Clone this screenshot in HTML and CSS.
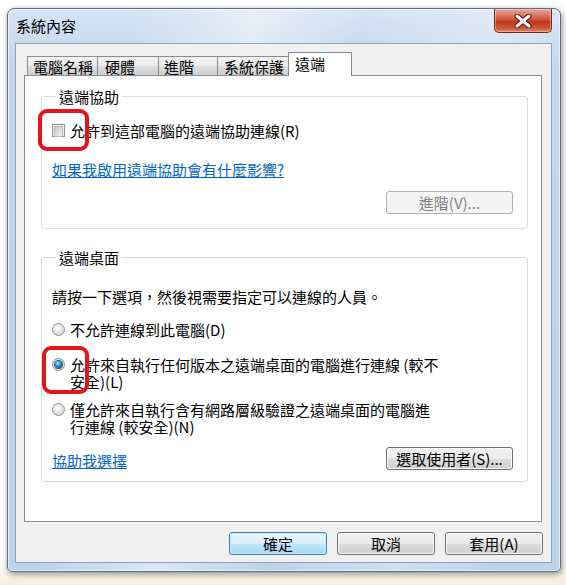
FILE: index.html
```html
<!DOCTYPE html>
<html lang="zh-Hant">
<head>
    <meta charset="UTF-8">
    <meta name="viewport" content="width=device-width, initial-scale=1.0">
    <title>系統內容</title>
    <link rel="stylesheet" href="styles.css">
</head>
<body>
    <div class="window">
        <div class="titlebar">
            <span class="title">系統內容</span>
            <button class="close-btn" aria-label="關閉">
                <svg width="18" height="14" viewBox="0 0 18 14">
                    <path d="M3 2 L15 12 M15 2 L3 12" stroke="#4a1d17" stroke-width="5.2" stroke-linecap="round" fill="none"/>
                    <path d="M3 2 L15 12 M15 2 L3 12" stroke="#ffffff" stroke-width="3" stroke-linecap="round" fill="none"/>
                </svg>
            </button>
        </div>

        <div class="client">
            <div class="tabs">
                <div class="tab tab-name">電腦名稱</div>
                <div class="tab tab-hw">硬體</div>
                <div class="tab tab-adv">進階</div>
                <div class="tab tab-prot">系統保護</div>
                <div class="tab tab-remote selected">遠端</div>
            </div>

            <div class="panel">
                <div class="group group-assist">
                    <div class="group-title">遠端協助</div>
                    <label class="option">
                        <span class="checkbox"></span>
                        <span>允許到這部電腦的遠端協助連線(R)</span>
                    </label>
                    <a class="link" href="#">如果我啟用遠端協助會有什麼影響?</a>
                    <div class="btn-row right">
                        <button class="btn wide" disabled>進階(V)...</button>
                    </div>
                    <span class="highlight hl-check"></span>
                </div>

                <div class="group group-desktop">
                    <div class="group-title">遠端桌面</div>
                    <p class="desc">請按一下選項，然後視需要指定可以連線的人員。</p>
                    <label class="option radio-1">
                        <span class="radio"></span>
                        <span>不允許連線到此電腦(D)</span>
                    </label>
                    <label class="option radio-2">
                        <span class="radio checked"></span>
                        <span>允許來自執行任何版本之遠端桌面的電腦進行連線 (較不<br>安全)(L)</span>
                    </label>
                    <label class="option radio-3">
                        <span class="radio"></span>
                        <span>僅允許來自執行含有網路層級驗證之遠端桌面的電腦進<br>行連線 (較安全)(N)</span>
                    </label>
                    <div class="btn-row split">
                        <a class="link" href="#">協助我選擇</a>
                        <button class="btn wide">選取使用者(S)...</button>
                    </div>
                    <span class="highlight hl-radio"></span>
                </div>
            </div>

            <div class="dialog-buttons">
                <button class="btn default">確定</button>
                <button class="btn">取消</button>
                <button class="btn">套用(A)</button>
            </div>
        </div>
    </div>
</body>
</html>
```

FILE: styles.css
```css
* { box-sizing: border-box; }
body {
    margin: 0;
    padding: 8px 0 0 7px;
    height: 585px;
    background: linear-gradient(#ffffff 0, #ffffff 560px, #f4f0dc 100%);
    font-family: "Noto Sans CJK TC", "Noto Sans", sans-serif;
    font-size: 15px;
    line-height: 17px;
    color: #000;
    overflow: hidden;
}

/* window frame */
.window {
    width: 554px;
    height: 564px;
    display: flex;
    flex-direction: column;
    border: 1px solid #5d6f86;
    border-radius: 7px 7px 5px 5px;
    background:
        linear-gradient(100deg, rgba(255,255,255,0) 20%, rgba(255,255,255,0.45) 38%, rgba(255,255,255,0) 55%, rgba(255,255,255,0.3) 75%, rgba(255,255,255,0) 90%),
        linear-gradient(#d6e4f3, #c0d5ed 60px, #bcd3ec 100%);
    box-shadow: 1px 2px 6px rgba(0,0,0,0.45), inset 0 0 0 1px rgba(255,255,255,0.6);
}
.titlebar {
    height: 34px;
    display: flex;
    justify-content: space-between;
    align-items: flex-start;
    padding: 0 8px 0 8px;
}
.title { margin-top: 8px; }
.close-btn {
    width: 58px;
    height: 24px;
    margin-top: 0;
    padding: 0;
    border: 1px solid #6b2b22;
    border-top: none;
    border-radius: 0 0 5px 5px;
    background: linear-gradient(#e9a99b 0, #d5604a 40%, #c2361b 55%, #cf5a3c 85%, #e08b6c 100%);
    box-shadow: inset 0 0 0 1px rgba(255,220,200,0.45);
    display: flex;
    align-items: center;
    justify-content: center;
}

/* client area */
.client {
    flex: 1;
    margin: 0 8px 8px 7px;
    background: #f0f0f0;
    border: 1px solid #8da2bb;
    display: flex;
    flex-direction: column;
}
.tabs {
    display: flex;
    align-items: flex-end;
    height: 31px;
    padding: 8px 0 0 11px;
}
.tab {
    height: 19px;
    margin-right: -1px;
    padding: 1px 0 0 5px;
    border: 1px solid #898c95;
    border-bottom: none;
    background: linear-gradient(#f3f3f3 0, #ebebeb 50%, #dddddd 51%, #cfcfcf 100%);
    white-space: nowrap;
}
.tab-name { width: 71px; }
.tab-hw { width: 62px; padding-left: 7px; }
.tab-adv { width: 60px; padding-left: 5px; }
.tab-prot { width: 73px; padding-left: 6px; }
.tab.selected {
    width: 64px;
    height: 24px;
    margin-left: -1px;
    margin-bottom: -1px;
    padding: 2px 0 0 6px;
    background: #fff;
    position: relative;
    z-index: 1;
}
.panel {
    width: 518px;
    height: 447px;
    margin-left: 8px;
    background: #fff;
    border: 1px solid #898c95;
    padding: 20px 13px 0 16px;
}

/* group boxes */
.group {
    position: relative;
    border: 1px solid #d5dfe5;
    border-radius: 3px;
    padding: 0 14px 14px 10px;
}
.group-desktop { margin-top: 28px; padding-bottom: 11px; }
.group-title {
    display: table;
    margin: -9px 0 0 4px;
    padding: 0 3px;
    background: #fff;
}
.option {
    display: flex;
    align-items: flex-start;
    gap: 5px;
}
.group-assist .option { margin-top: 17px; }
.desc { margin: 22px 0 0 0; }
.radio-1 { margin-top: 16px; }
.radio-2 { margin-top: 18px; }
.radio-3 { margin-top: 11px; }

.checkbox {
    flex: none;
    width: 13px;
    height: 13px;
    margin-top: 2px;
    border: 1px solid #8e8f8f;
    background: #f4f4f4;
}
.checkbox::after {
    content: "";
    display: block;
    margin: 1px;
    height: 9px;
    border: 1px solid #b5b9bd;
    background: linear-gradient(135deg, #c6cacf, #f2f2f2);
}
.radio {
    flex: none;
    width: 13px;
    height: 13px;
    margin-top: 2px;
    border: 1px solid #8e8f8f;
    border-radius: 50%;
    background: radial-gradient(circle at 40% 35%, #ffffff 0, #e6e6e6 45%, #c9c9c9 100%);
}
.radio.checked::after {
    content: "";
    display: block;
    width: 7px;
    height: 7px;
    margin: 2px;
    border-radius: 50%;
    background: radial-gradient(circle at 40% 35%, #c6ecfd 0, #3a9ad8 35%, #0c4b7f 80%);
    box-shadow: 0 0 0 1px #1b5a8a;
}

.link {
    display: table;
    color: #0066cc;
    text-decoration: underline;
}
.group-assist .link { margin-top: 22px; }
.btn-row {
    display: flex;
    margin-top: 13px;
}
.btn-row.right { justify-content: flex-end; }
.btn-row.split {
    justify-content: space-between;
    align-items: flex-end;
    margin-top: 12px;
}
.btn-row.split .link { margin-bottom: 1px; }

/* buttons */
.btn {
    width: 98px;
    height: 23px;
    padding: 0;
    border: 1px solid #707070;
    border-radius: 3px;
    background: linear-gradient(#f2f2f2 0, #ebebeb 50%, #dddddd 51%, #cfcfcf 100%);
    box-shadow: inset 0 0 0 1px #fbfbfb;
    font: inherit;
    line-height: 20px;
    color: #000;
}
.btn.wide { width: 127px; }
.btn:disabled {
    border-color: #adb2b5;
    background: #f4f4f4;
    box-shadow: none;
    color: #838383;
}
.btn.default {
    border-color: #3c7fb1;
    background: linear-gradient(#eaf6fd 0, #d9f0fc 50%, #bee6fd 51%, #a7d9f5 100%);
    box-shadow: inset 0 0 0 1px #c8ecfb;
}
.dialog-buttons {
    display: flex;
    justify-content: flex-end;
    gap: 10px;
    margin-top: 10px;
    padding-right: 8px;
}

/* red annotation frames */
.highlight {
    position: absolute;
    border: 4px solid #e3151b;
    border-radius: 9px;
}
.hl-check { left: -4px; top: 12px; width: 51px; height: 42px; }
.hl-radio { left: 0; top: 88px; width: 47px; height: 48px; }
```
